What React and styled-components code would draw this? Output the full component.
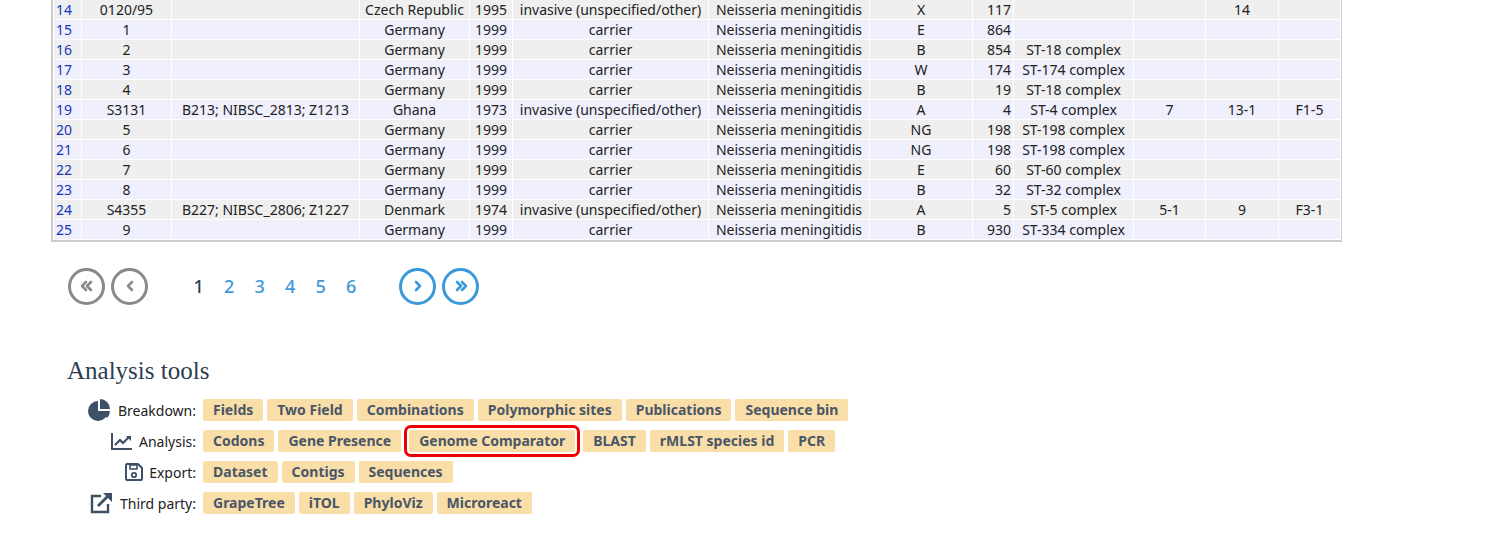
import React from "react";
import styled, { createGlobalStyle } from "styled-components";

const G = createGlobalStyle`
  body { margin: 0; background: #fff; font-family: "Noto Sans", "Open Sans", sans-serif; font-size: 14px; color: #222; }
`;

const Page = styled.div`padding-left: 51px; overflow: hidden; height: 550px;`;
const TableWrap = styled.div`
  width: 1287px; border: 2px solid #ccc; border-top: none; margin-top: -1px;
`;
const Table = styled.table`
  border-collapse: collapse; table-layout: fixed; width: 100%;
  font-size: 14px; line-height: 19px;
`;
const Tr = styled.tr`background: ${p => (p.$alt ? "#efeffd" : "#efefef")};`;
const Td = styled.td`
  border: 1px solid #fff; padding: 0 2px; text-align: center; white-space: nowrap; overflow: hidden; height: 19px;
  &:first-child { text-align: left; color: #1a35c0; padding-left: 2px; }
`;

const rows = [
  ["14","0120/95","","Czech Republic","1995","invasive (unspecified/other)","X","117","","","14",""],
  ["15","1","","Germany","1999","carrier","E","864","","","",""],
  ["16","2","","Germany","1999","carrier","B","854","ST-18 complex","","",""],
  ["17","3","","Germany","1999","carrier","W","174","ST-174 complex","","",""],
  ["18","4","","Germany","1999","carrier","B","19","ST-18 complex","","",""],
  ["19","S3131","B213; NIBSC_2813; Z1213","Ghana","1973","invasive (unspecified/other)","A","4","ST-4 complex","7","13-1","F1-5"],
  ["20","5","","Germany","1999","carrier","NG","198","ST-198 complex","","",""],
  ["21","6","","Germany","1999","carrier","NG","198","ST-198 complex","","",""],
  ["22","7","","Germany","1999","carrier","E","60","ST-60 complex","","",""],
  ["23","8","","Germany","1999","carrier","B","32","ST-32 complex","","",""],
  ["24","S4355","B227; NIBSC_2806; Z1227","Denmark","1974","invasive (unspecified/other)","A","5","ST-5 complex","5-1","9","F3-1"],
  ["25","9","","Germany","1999","carrier","B","930","ST-334 complex","","",""],
];
const widths = [28, 90, 188, 110, 43, 196, 161, 103, 41, 120, 72, 73, 62];

const Pager = styled.div`display: flex; align-items: center; margin: 25px 0 0 17px; height: 38px;`;
const Circle = styled.div`
  width: 31px; height: 31px; border-radius: 50%; border: 3px solid ${p => p.$on ? "#3a9ad9" : "#8a8a8a"};
  color: ${p => p.$on ? "#3a9ad9" : "#8a8a8a"}; display: flex; align-items: center; justify-content: center;
  margin-right: 6px;
`;
const Nums = styled.div`display: flex; gap: 15px; margin: 0 40px 0 37px; font-size: 18px; font-weight: 500;`;
const Num = styled.span`color: ${p => p.$cur ? "#2c3e50" : "#3a9ad9"}; width: 15.5px; text-align: center;`;

const Heading = styled.h2`
  font-family: "Liberation Serif", serif; font-weight: normal; font-size: 25px; color: #2c3e50;
  margin: 51px 0 0 16px; line-height: 30px;
`;
const Tools = styled.div`display: grid; grid-template-columns: 145px auto; row-gap: 9px; column-gap: 7px; margin-top: 13px; align-items: center;`;
const Label = styled.div`display: flex; justify-content: flex-end; align-items: center; gap: 6px; font-size: 14px; color: #222; white-space: nowrap;`;
const Btns = styled.div`display: flex; gap: 4px;`;
const Btn = styled.span`
  background: #f9dfa7; color: #4a5668; font-weight: 700; font-size: 14px; height: 22px; line-height: 22px;
  padding: 0 10px; border-radius: 2px; white-space: nowrap;
  ${p => p.$hl && "outline: 3px solid #e00; outline-offset: 2px; margin: 0 4px;"}
`;
const ic = { fill: "#3d5066" };

const Pie = () => (<svg width="24" height="22" viewBox="0 0 24 22"><path d="M10 2a10 10 0 1 0 10 10H10z" {...ic}/><path d="M12 0v10h10A10 10 0 0 0 12 0z" {...ic}/><path d="M13 12h9a10 10 0 0 1-3 7z" {...ic}/></svg>);
const Chart = () => (<svg width="22" height="18" viewBox="0 0 22 18"><path d="M1 1v16h20" stroke="#3d5066" strokeWidth="2" fill="none"/><path d="M4 13l5-5 3 3 6-6" stroke="#3d5066" strokeWidth="2.2" fill="none"/><path d="M15 4h5v5z" {...ic}/></svg>);
const Save = () => (<svg width="18" height="18" viewBox="0 0 18 18"><path d="M2 1h11l4 4v11a1 1 0 0 1-1 1H2a1 1 0 0 1-1-1V2a1 1 0 0 1 1-1z" stroke="#3d5066" strokeWidth="2" fill="none"/><path d="M5 2h7v4H5z" stroke="#3d5066" strokeWidth="1.6" fill="none"/><circle cx="9" cy="12" r="2.2" stroke="#3d5066" strokeWidth="1.8" fill="none"/></svg>);
const Ext = () => (<svg width="24" height="22" viewBox="0 0 24 22"><path d="M11 4H2v16h16v-8" stroke="#3d5066" strokeWidth="2.4" fill="none"/><path d="M8 14L20 2" stroke="#3d5066" strokeWidth="2.8"/><path d="M13 1h9v9z" {...ic}/></svg>);

const tools = [
  [<Pie/>, "Breakdown:", ["Fields","Two Field","Combinations","Polymorphic sites","Publications","Sequence bin"]],
  [<Chart/>, "Analysis:", ["Codons","Gene Presence","Genome Comparator","BLAST","rMLST species id","PCR"]],
  [<Save/>, "Export:", ["Dataset","Contigs","Sequences"]],
  [<Ext/>, "Third party:", ["GrapeTree","iTOL","PhyloViz","Microreact"]],
];

const Arrow = ({ d, dbl }) => (
  <svg width="16" height="16" viewBox="0 0 16 16" fill="none" stroke="currentColor" strokeWidth="2.6" strokeLinecap="round" strokeLinejoin="round">
    {dbl ? (d > 0 ? <><path d="M4 4l4 4-4 4"/><path d="M9 4l4 4-4 4"/></> : <><path d="M12 4l-4 4 4 4"/><path d="M7 4l-4 4 4 4"/></>)
      : (d > 0 ? <path d="M6 4l4 4-4 4"/> : <path d="M10 4l-4 4 4 4"/>)}
  </svg>
);

export default function App() {
  return (
    <Page>
      <G />
      <TableWrap>
        <Table>
          <colgroup>{widths.map((w, i) => <col key={i} style={{ width: w }} />)}</colgroup>
          <tbody>
            {rows.map((r, i) => (
              <Tr key={i} $alt={i % 2 === 1}>
                <Td>{r[0]}</Td><Td>{r[1]}</Td><Td>{r[2]}</Td><Td>{r[3]}</Td><Td>{r[4]}</Td><Td>{r[5]}</Td>
                <Td>Neisseria meningitidis</Td><Td>{r[6]}</Td>
                <Td style={{ textAlign: "right" }}>{r[7]}</Td><Td>{r[8]}</Td><Td>{r[9]}</Td><Td>{r[10]}</Td><Td>{r[11]}</Td>
              </Tr>
            ))}
          </tbody>
        </Table>
      </TableWrap>
      <Pager>
        <Circle><Arrow d={-1} dbl /></Circle>
        <Circle><Arrow d={-1} /></Circle>
        <Nums>{[1,2,3,4,5,6].map(n => <Num key={n} $cur={n===1}>{n}</Num>)}</Nums>
        <Circle $on><Arrow d={1} /></Circle>
        <Circle $on><Arrow d={1} dbl /></Circle>
      </Pager>
      <Heading>Analysis tools</Heading>
      <Tools>
        {tools.map(([icon, l, bs]) => (
          <React.Fragment key={l}>
            <Label>{icon}{l}</Label>
            <Btns>{bs.map(b => <Btn key={b} $hl={b === "Genome Comparator"}>{b}</Btn>)}</Btns>
          </React.Fragment>
        ))}
      </Tools>
    </Page>
  );
}
